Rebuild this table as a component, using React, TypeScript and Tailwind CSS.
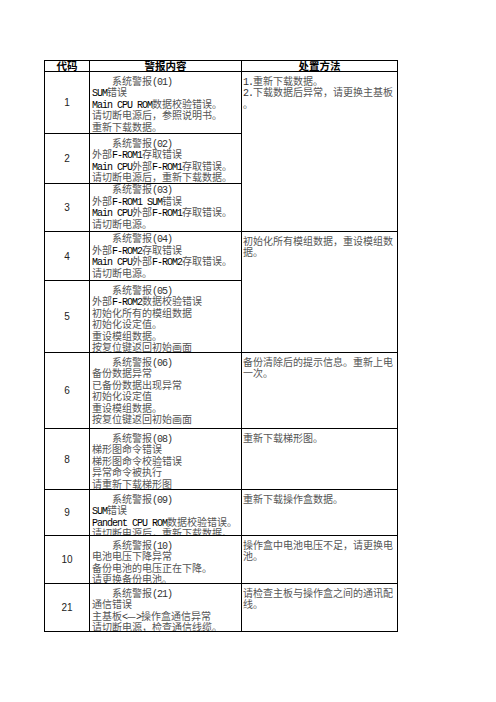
const cjk = "font-['Noto_Sans_CJK_SC',sans-serif]";

interface AlarmRow {
  code: string;
  h: number;
  lines: string[];
  bottom?: boolean;
  fix?: { span: number; lines: string[] };
}

const rows: AlarmRow[] = [
  {
    code: '1',
    h: 62,
    lines: ['系统警报(01)', 'SUM错误', 'Main CPU ROM数据校验错误。', '请切断电源后，参照说明书。', '重新下载数据。'],
    fix: { span: 3, lines: ['1.重新下载数据。', '2.下载数据后异常，请更换主基板', '。'] },
  },
  {
    code: '2',
    h: 50,
    lines: ['系统警报(02)', '外部F-ROM1存取错误', 'Main CPU外部F-ROM1存取错误。', '请切断电源后，重新下载数据。'],
  },
  {
    code: '3',
    h: 48,
    bottom: true,
    lines: ['系统警报(03)', '外部F-ROM1 SUM错误', 'Main CPU外部F-ROM1存取错误。', '请切断电源。'],
  },
  {
    code: '4',
    h: 49,
    bottom: true,
    lines: ['系统警报(04)', '外部F-ROM2存取错误', 'Main CPU外部F-ROM2存取错误。', '请切断电源。'],
    fix: { span: 2, lines: ['初始化所有模组数据，重设模组数', '据。'] },
  },
  {
    code: '5',
    h: 72,
    lines: ['系统警报(05)', '外部F-ROM2数据校验错误', '初始化所有的模组数据', '初始化设定值。', '重设模组数据。', '按复位键返回初始画面'],
  },
  {
    code: '6',
    h: 76,
    lines: ['系统警报(06)', '备份数据异常', '已备份数据出现异常', '初始化设定值', '重设模组数据。', '按复位键返回初始画面'],
    fix: { span: 1, lines: ['备份清除后的提示信息。重新上电', '一次。'] },
  },
  {
    code: '8',
    h: 61,
    lines: ['系统警报(08)', '梯形图命令错误', '梯形图命令校验错误', '异常命令被执行', '请重新下载梯形图'],
    fix: { span: 1, lines: ['重新下载梯形图。'] },
  },
  {
    code: '9',
    h: 46,
    lines: ['系统警报(09)', 'SUM错误', 'Pandent CPU ROM数据校验错误。', '请切断电源后，重新下载数据。'],
    fix: { span: 1, lines: ['重新下载操作盒数据。'] },
  },
  {
    code: '10',
    h: 48,
    lines: ['系统警报(10)', '电池电压下降异常', '备份电池的电压正在下降。', '请更换备份电池。'],
    fix: { span: 1, lines: ['操作盒中电池电压不足，请更换电', '池。'] },
  },
  {
    code: '21',
    h: 48,
    lines: ['系统警报(21)', '通信错误', '主基板<—>操作盒通信异常', '请切断电源，检查通信线缆。'],
    fix: { span: 1, lines: ['请检查主板与操作盒之间的通讯配', '线。'] },
  },
];

// half-width runs look like SimSun's narrow latin, so squeeze a mono face
function Line({ text, indent = false }: { text: string; indent?: boolean }) {
  const parts = text.split(/([\x20-\x7E]+)/).filter(Boolean);
  return (
    <div className={`h-[11.6px] shrink-0 whitespace-nowrap leading-[11.6px] ${indent ? 'pl-[20px]' : ''}`}>
      {parts.map((p, i) =>
        /^[\x20-\x7E]+$/.test(p) ? (
          <span
            key={i}
            className={`font-['Liberation_Mono',monospace] leading-none tracking-[-1px] ${
              /[A-Za-z]/.test(p) ? 'text-black' : 'text-[#333]'
            }`}
          >
            {p}
          </span>
        ) : (
          <span key={i} className="leading-none">{p}</span>
        )
      )}
    </div>
  );
}

export default function App() {
  return (
    <div className={`min-h-[702px] w-[496px] bg-white pt-[60px] pl-[44px] ${cjk}`}>
      <table className="table-fixed border-collapse border border-black text-[10px] text-[#555]">
        <colgroup>
          <col className="w-[45px]" />
          <col className="w-[152px]" />
          <col className="w-[156px]" />
        </colgroup>
        <thead>
          <tr className="h-[11px]">
            {['代码', '警报内容', '处置方法'].map((t) => (
              <th key={t} className="border border-black p-0 text-center text-[10.5px] leading-[10px] font-bold text-black">
                {t}
              </th>
            ))}
          </tr>
        </thead>
        <tbody>
          {rows.map((r) => (
            <tr key={r.code}>
              <td className="border border-black p-0 text-center align-middle font-['Liberation_Sans',sans-serif] text-[10px] text-[#222]">
                {r.code}
              </td>
              <td className="border border-black p-0 align-top">
                <div
                  className={`flex flex-col overflow-hidden pl-[2px] ${r.bottom ? 'justify-end pb-[1.5px]' : 'pt-[2.5px]'}`}
                  style={{ height: r.h - 1 }}
                >
                  {r.lines.map((l, i) => (
                    <Line key={i} text={l} indent={i === 0} />
                  ))}
                </div>
              </td>
              {r.fix && (
                <td rowSpan={r.fix.span} className="border border-black p-0 align-top">
                  <div className="pt-[2.5px] pl-[1px]">
                    {r.fix.lines.map((l, i) => (
                      <Line key={i} text={l} />
                    ))}
                  </div>
                </td>
              )}
            </tr>
          ))}
        </tbody>
      </table>
    </div>
  );
}
